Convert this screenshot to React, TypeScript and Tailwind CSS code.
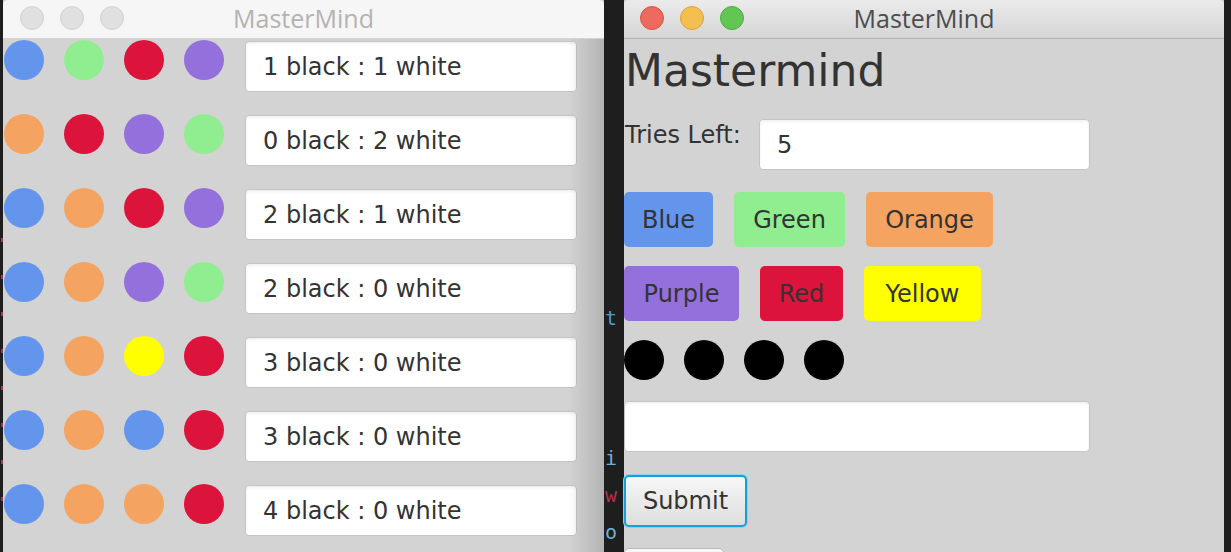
const font = "font-['DejaVu_Sans',sans-serif]";

const rows = [
  { pegs: ["bg-[#6495ed]", "bg-[#90ee90]", "bg-[#dc143c]", "bg-[#9370db]"], result: "1 black : 1 white" },
  { pegs: ["bg-[#f4a460]", "bg-[#dc143c]", "bg-[#9370db]", "bg-[#90ee90]"], result: "0 black : 2 white" },
  { pegs: ["bg-[#6495ed]", "bg-[#f4a460]", "bg-[#dc143c]", "bg-[#9370db]"], result: "2 black : 1 white" },
  { pegs: ["bg-[#6495ed]", "bg-[#f4a460]", "bg-[#9370db]", "bg-[#90ee90]"], result: "2 black : 0 white" },
  { pegs: ["bg-[#6495ed]", "bg-[#f4a460]", "bg-[#ffff00]", "bg-[#dc143c]"], result: "3 black : 0 white" },
  { pegs: ["bg-[#6495ed]", "bg-[#f4a460]", "bg-[#6495ed]", "bg-[#dc143c]"], result: "3 black : 0 white" },
  { pegs: ["bg-[#6495ed]", "bg-[#f4a460]", "bg-[#f4a460]", "bg-[#dc143c]"], result: "4 black : 0 white" },
];

const colorButtons = [
  [
    { label: "Blue", cls: "w-[89px] bg-[#6495ed]" },
    { label: "Green", cls: "w-[111px] bg-[#90ee90]" },
    { label: "Orange", cls: "w-[127px] bg-[#f4a460]" },
  ],
  [
    { label: "Purple", cls: "w-[115px] bg-[#9370db]" },
    { label: "Red", cls: "w-[83px] bg-[#dc143c]" },
    { label: "Yellow", cls: "w-[117px] bg-[#ffff00]" },
  ],
];

const field =
  "bg-white border border-[#c4c4c4] rounded-[4px] shadow-[inset_0_2px_3px_rgba(0,0,0,0.06)] flex items-center text-[24px] text-[#333]";

function TitleBar({ active }: { active: boolean }) {
  const lights = active
    ? [
        "bg-[#ee6a5f] border-[#d5544a]",
        "bg-[#f5bf4f] border-[#d9a23f]",
        "bg-[#62c655] border-[#4fa944]",
      ]
    : ["bg-[#e0e0e0] border-[#d2d2d2]", "bg-[#e0e0e0] border-[#d2d2d2]", "bg-[#e0e0e0] border-[#d2d2d2]"];
  return (
    <div
      className={`relative h-[39px] shrink-0 rounded-t-[5px] border-b flex items-center ${
        active
          ? "bg-linear-to-b from-[#ebebeb] to-[#d5d5d5] border-[#b1b1b1]"
          : "bg-[#f6f6f6] border-[#d4d4d4]"
      }`}
    >
      <div className={`flex gap-[16px] ${active ? "pl-[16px]" : "pl-[17px]"} -mt-[2px]`}>
        {lights.map((c, i) => (
          <span key={i} className={`w-[24px] h-[24px] rounded-full border ${c}`} />
        ))}
      </div>
      <div
        className={`absolute inset-0 flex items-center justify-center font-['Open_Sans',sans-serif] text-[25px] -mt-[1px] ${
          active ? "text-[#4d4d4d]" : "text-[#b3b3b3]"
        }`}
      >
        MasterMind
      </div>
    </div>
  );
}

function HistoryWindow() {
  return (
    <div className="w-[601px] shrink-0 flex flex-col bg-[#d3d3d3]">
      <TitleBar active={false} />
      <div className={`relative flex-1 flex flex-col pt-[1px] ${font}`}>
        {rows.map((r, i) => (
          <div key={i} className="h-[74px] shrink-0 flex items-start">
            <div className="flex gap-[20px] pl-[1px]">
              {r.pegs.map((p, j) => (
                <span key={j} className={`w-[40px] h-[40px] rounded-full ${p}`} />
              ))}
            </div>
            <div className={`${field} ml-[21px] mt-[1px] w-[332px] h-[51px] pl-[17px]`}>{r.result}</div>
          </div>
        ))}
        <div className="pointer-events-none absolute right-0 top-0 bottom-0 w-[36px] bg-linear-to-r from-transparent to-black/15" />
      </div>
    </div>
  );
}

function GameWindow() {
  return (
    <div className="w-[600px] shrink-0 flex flex-col bg-[#d3d3d3]">
      <TitleBar active={true} />
      <div className={`flex-1 flex flex-col items-start pt-[6px] text-[#333] ${font}`}>
        <h1 className="pl-[1px] text-[44px] leading-[51px]">Mastermind</h1>
        <div className="mt-[23px] flex items-start">
          <span className="pl-[1px] mt-[2px] text-[24px] leading-[28px] w-[135px]">Tries Left:</span>
          <div className={`${field} w-[331px] h-[51px] pl-[17px]`}>5</div>
        </div>
        {colorButtons.map((row, i) => (
          <div key={i} className={`flex gap-[21px] ${i === 0 ? "mt-[22px]" : "mt-[19px]"}`}>
            {row.map((b) => (
              <button
                key={b.label}
                className={`h-[55px] rounded-[5px] text-[24px] text-[#333] flex items-center justify-center ${b.cls}`}
              >
                {b.label}
              </button>
            ))}
          </div>
        ))}
        <div className="mt-[19px] flex gap-[20px]">
          {[0, 1, 2, 3].map((i) => (
            <span key={i} className="w-[40px] h-[40px] rounded-full bg-black" />
          ))}
        </div>
        <div className={`${field} mt-[21px] w-[466px] h-[51px]`} />
        <button className="mt-[23px] w-[123px] h-[52px] rounded-[5px] border-2 border-[#12a1d8] shadow-[0_0_0_1px_#8fd0ec] bg-linear-to-b from-[#f7f7f7] to-[#dedede] text-[24px] text-[#333] flex items-center justify-center">
          Submit
        </button>
        <div className="mt-[21px] w-[100px] h-[52px] rounded-[5px] border border-[#b9b9b9] bg-linear-to-b from-[#f7f7f7] to-[#dedede]" />
      </div>
    </div>
  );
}

function CodeStrip() {
  return (
    <div className="w-[20px] shrink-0 overflow-hidden flex flex-col font-['DejaVu_Sans_Mono',monospace] text-[20px] leading-[37px] pl-[1px]">
      <div className="h-[300px] shrink-0" />
      <span className="text-[#4b9ac4]">t</span>
      <div className="h-[103px] shrink-0" />
      <span className="text-[#6bb2d4]">i</span>
      <span className="text-[#b52d58]">w</span>
      <span className="text-[#6bb2d4]">o</span>
    </div>
  );
}

export default function App() {
  return (
    <div className="w-[1231px] h-[552px] overflow-hidden flex bg-[#1e1e1e]">
      <div className="w-[3px] shrink-0 flex flex-col items-end gap-[33px] pt-[238px]">
        {[0, 1, 2, 3, 4, 5, 6, 7].map((i) => (
          <span key={i} className="w-[2px] h-[4px] bg-[#b52d58]" />
        ))}
      </div>
      <HistoryWindow />
      <CodeStrip />
      <GameWindow />
      <div className="w-[7px] shrink-0" />
    </div>
  );
}
